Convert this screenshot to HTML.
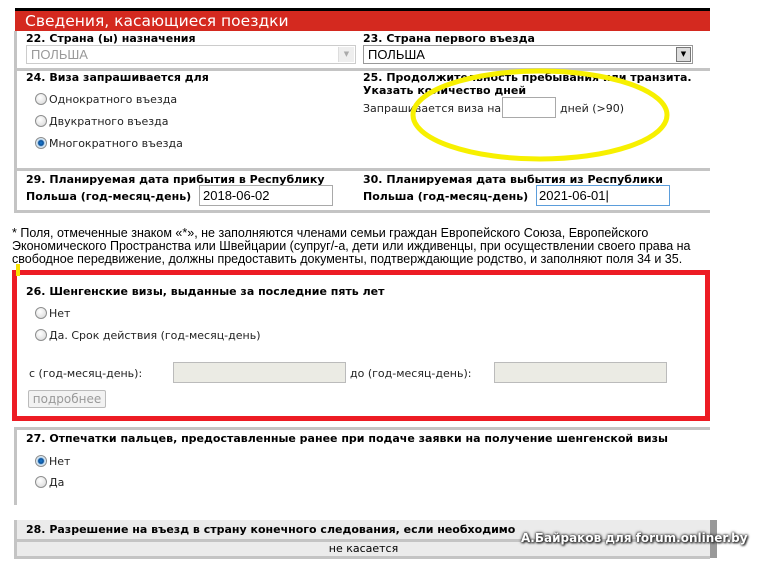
<!DOCTYPE html>
<html><head><meta charset="utf-8"><style>
body{margin:0;width:768px;height:562px;background:#fff;position:relative;overflow:hidden;font-family:"DejaVu Sans","Liberation Sans",sans-serif;font-size:11px;color:#000}
.a{position:absolute;white-space:nowrap}
.b{font-weight:bold;font-size:11px;letter-spacing:0}
.t{font-size:11px;color:#222}
.hl{position:absolute;background:#c4c4c4;height:3px}
.vl{position:absolute;background:#c4c4c4;width:3px}
.inp{position:absolute;border:1px solid #a9a9a9;background:#fff;box-sizing:border-box}
.r{position:absolute;width:10px;height:10px;border-radius:50%;border:1px solid #8e8f8f;background:radial-gradient(circle at 40% 35%,#fff,#d6d6d6);}
.rc{background:radial-gradient(circle,#1c7dd2 0,#0a4f99 2.5px,#bcd8ee 3.5px,#e8f1f8 5px)}
.n{font-family:"Liberation Sans",sans-serif;font-size:12.5px;color:#000;line-height:13px}
</style></head><body>
<div class="a" style="left:15px;top:8px;width:695px;height:3px;background:#000"></div>
<div class="a" style="left:15px;top:11px;width:695px;height:20px;background:#d4291f;color:#fff;font-size:15.5px;line-height:20px;padding-left:10px;box-sizing:border-box">Сведения, касающиеся поездки</div>
<div class="vl" style="left:14px;top:31px;height:181px"></div>

<div class="a b" style="left:26px;top:32px">22. Страна (ы) назначения</div>
<div class="inp" style="left:26px;top:45px;width:330px;height:19px;border-color:#ccc"><span class="a" style="left:4px;top:1px;color:#999;font-family:'Liberation Sans',sans-serif;font-size:13px">ПОЛЬША</span><span class="a" style="right:1px;top:1px;width:15px;height:15px;background:#eee;border-left:1px solid #ddd;color:#aaa;font-size:7px;text-align:center;line-height:15px">▼</span></div>
<div class="a b" style="left:363px;top:32px">23. Страна первого въезда</div>
<div class="inp" style="left:363px;top:45px;width:330px;height:19px;border-color:#999"><span class="a" style="left:4px;top:1px;font-family:'Liberation Sans',sans-serif;font-size:13px">ПОЛЬША</span><span class="a" style="right:1px;top:1px;width:15px;height:15px;background:#ddd;border:1px solid #777;box-sizing:border-box;font-size:7px;text-align:center;line-height:13px">▼</span></div>
<div class="hl" style="left:14px;top:68px;width:696px"></div>

<div class="a b" style="left:26px;top:71px">24. Виза запрашивается для</div>
<div class="r" style="left:35px;top:93px"></div><div class="a t" style="left:49px;top:93px">Однократного въезда</div>
<div class="r" style="left:35px;top:115px"></div><div class="a t" style="left:49px;top:115px">Двукратного въезда</div>
<div class="r rc" style="left:35px;top:137px"></div><div class="a t" style="left:49px;top:137px">Многократного въезда</div>
<div class="a b" style="left:363px;top:71px">25. Продолжительность пребывания или транзита.</div>
<div class="a b" style="left:363px;top:84px">Указать количество дней</div>
<div class="a t" style="left:363px;top:102px">Запрашивается виза на</div>
<div class="inp" style="left:502px;top:97px;width:54px;height:21px"></div>
<div class="a t" style="left:560px;top:102px">дней (&gt;90)</div>
<svg class="a" style="left:405px;top:65px" width="270" height="100"><ellipse cx="135" cy="50" rx="127" ry="44" fill="none" stroke="#f7f000" stroke-width="5"/></svg>
<div class="hl" style="left:14px;top:168px;width:696px"></div>

<div class="a b" style="left:26px;top:173px">29. Планируемая дата прибытия в Республику</div>
<div class="a b" style="left:26px;top:190px">Польша (год-месяц-день)</div>
<div class="inp" style="left:199px;top:185px;width:134px;height:21px"><span class="a" style="left:3px;top:2px;font-family:'Liberation Sans',sans-serif;font-size:13px">2018-06-02</span></div>
<div class="a b" style="left:363px;top:173px">30. Планируемая дата выбытия из Республики</div>
<div class="a b" style="left:363px;top:190px">Польша (год-месяц-день)</div>
<div class="inp" style="left:536px;top:185px;width:134px;height:21px;border-color:#5b9ddb"><span class="a" style="left:2px;top:2px;font-family:'Liberation Sans',sans-serif;font-size:13px">2021-06-01|</span></div>
<div class="hl" style="left:14px;top:210px;width:696px"></div>

<div class="a n" style="left:12px;top:227px">* Поля, отмеченные знаком «*», не заполняются членами семьи граждан Европейского Союза, Европейского</div>
<div class="a n" style="left:12px;top:240px">Экономического Пространства или Швейцарии (супруг/-а, дети или иждивенцы, при осуществлении своего права на</div>
<div class="a n" style="left:12px;top:253px">свободное передвижение, должны предоставить документы, подтверждающие родство, и заполняют поля 34 и 35.</div>

<div class="a" style="left:12px;top:270px;width:698px;height:151px;border:5px solid #ed1c24;box-sizing:border-box"></div>
<div class="a" style="left:16px;top:264px;width:4px;height:12px;background:#f7e000"></div>
<div class="a b" style="left:26px;top:285px">26. Шенгенские визы, выданные за последние пять лет</div>
<div class="r" style="left:35px;top:307px"></div><div class="a t" style="left:49px;top:307px">Нет</div>
<div class="r" style="left:35px;top:329px"></div><div class="a t" style="left:49px;top:329px">Да. Срок действия (год-месяц-день)</div>
<div class="a t" style="left:29px;top:367px">с (год-месяц-день):</div>
<div class="inp" style="left:173px;top:362px;width:173px;height:21px;background:#ebebe4;border-color:#bbb"></div>
<div class="a t" style="left:350px;top:367px">до (год-месяц-день):</div>
<div class="inp" style="left:494px;top:362px;width:173px;height:21px;background:#ebebe4;border-color:#bbb"></div>
<div class="a" style="left:28px;top:390px;width:78px;height:18px;border:1px solid #bbb;border-radius:2px;background:#f2f2f2;box-sizing:border-box;color:#999;font-size:12px;text-align:center;line-height:16px">подробнее</div>

<div class="hl" style="left:14px;top:427px;width:696px"></div>
<div class="vl" style="left:14px;top:427px;height:78px"></div>
<div class="a b" style="left:26px;top:432px">27. Отпечатки пальцев, предоставленные ранее при подаче заявки на получение шенгенской визы</div>
<div class="r rc" style="left:35px;top:455px"></div><div class="a t" style="left:49px;top:455px">Нет</div>
<div class="r" style="left:35px;top:476px"></div><div class="a t" style="left:49px;top:476px">Да</div>

<div class="a" style="left:14px;top:520px;width:696px;height:20px;background:#ebebeb;border-left:3px solid #c4c4c4;box-sizing:border-box"></div>
<div class="a" style="left:710px;top:520px;width:7px;height:38px;background:#999"></div>
<div class="a b" style="left:26px;top:523px">28. Разрешение на въезд в страну конечного следования, если необходимо</div>
<div class="hl" style="left:14px;top:539px;width:696px"></div>
<div class="a" style="left:14px;top:542px;width:696px;height:14px;background:#ebebeb;border-left:3px solid #c4c4c4;box-sizing:border-box;text-align:center;font-size:11px;line-height:14px">не касается</div>
<div class="hl" style="left:14px;top:556px;width:696px"></div>
<div class="a" style="left:521px;top:531px;color:#fff;font-weight:bold;font-size:12px;text-shadow:0 0 2px #333,0 0 3px #333,1px 1px 2px #000">А.Байраков для forum.onliner.by</div>
</body></html>
